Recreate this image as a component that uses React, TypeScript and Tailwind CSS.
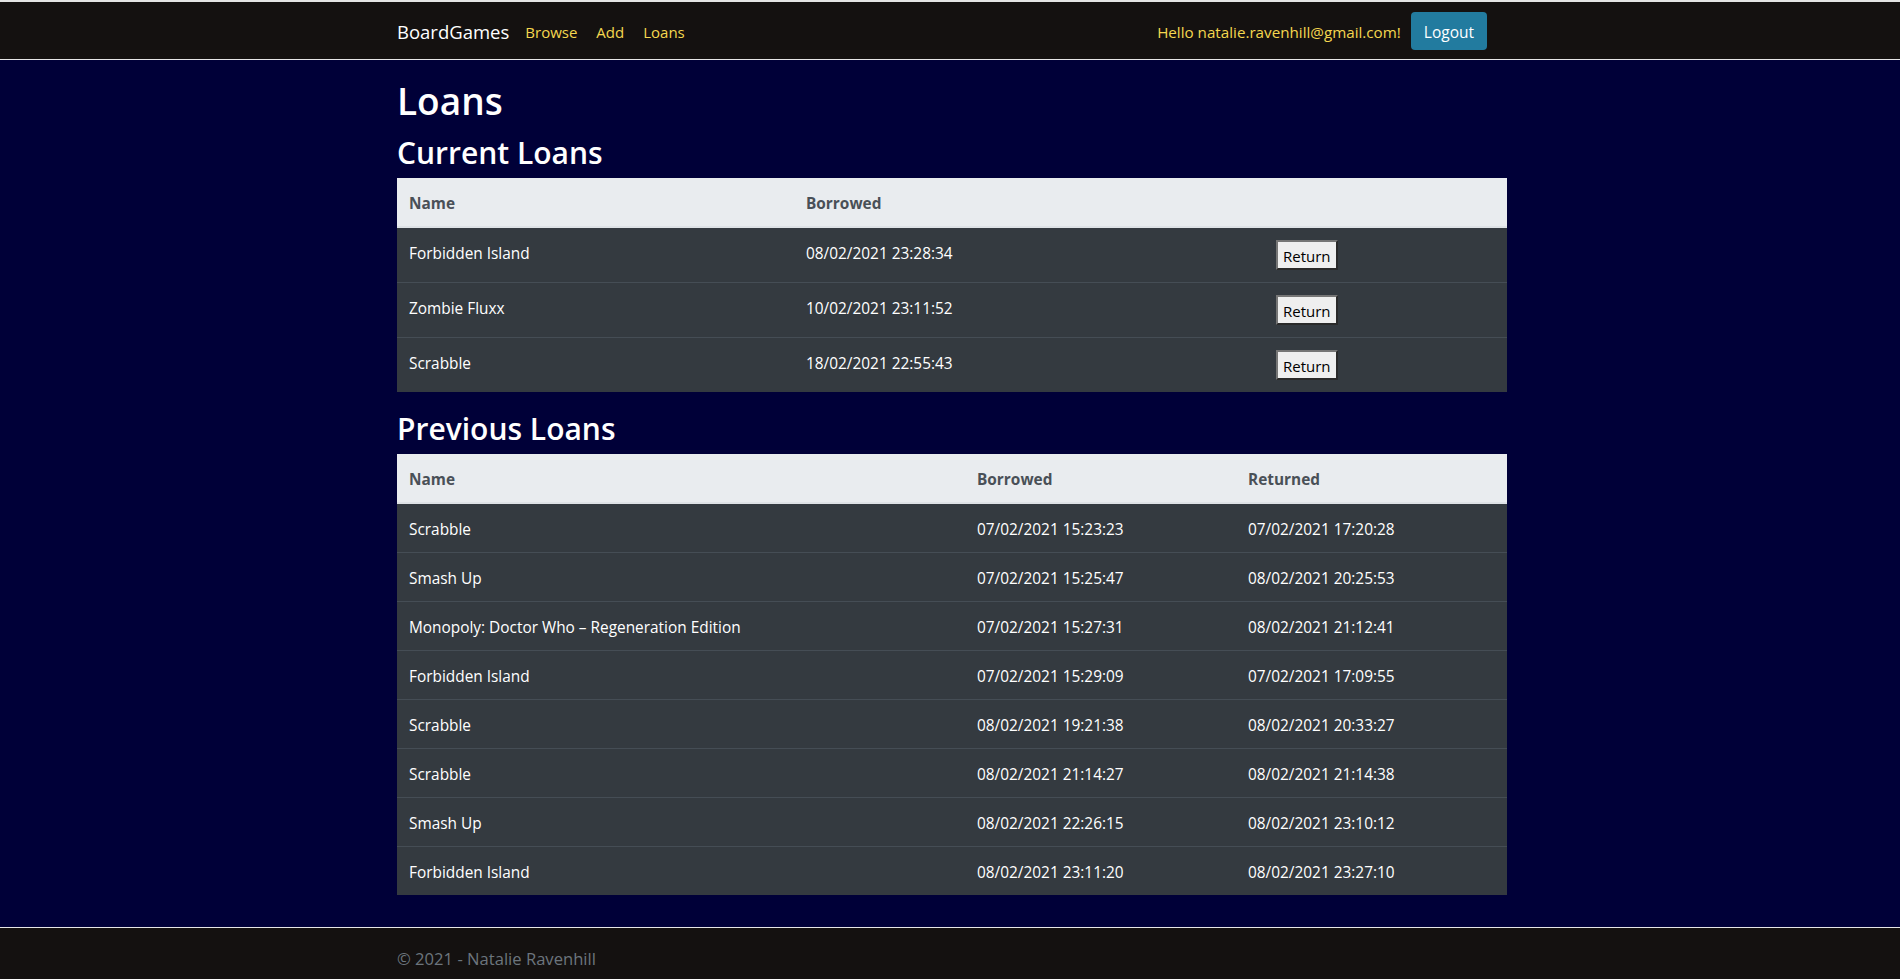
import React from "react";

interface CurrentLoan {
  name: string;
  borrowed: string;
}

interface PreviousLoan {
  name: string;
  borrowed: string;
  returned: string;
}

const currentLoans: CurrentLoan[] = [
  { name: "Forbidden Island", borrowed: "08/02/2021 23:28:34" },
  { name: "Zombie Fluxx", borrowed: "10/02/2021 23:11:52" },
  { name: "Scrabble", borrowed: "18/02/2021 22:55:43" },
];

const previousLoans: PreviousLoan[] = [
  { name: "Scrabble", borrowed: "07/02/2021 15:23:23", returned: "07/02/2021 17:20:28" },
  { name: "Smash Up", borrowed: "07/02/2021 15:25:47", returned: "08/02/2021 20:25:53" },
  { name: "Monopoly: Doctor Who – Regeneration Edition", borrowed: "07/02/2021 15:27:31", returned: "08/02/2021 21:12:41" },
  { name: "Forbidden Island", borrowed: "07/02/2021 15:29:09", returned: "07/02/2021 17:09:55" },
  { name: "Scrabble", borrowed: "08/02/2021 19:21:38", returned: "08/02/2021 20:33:27" },
  { name: "Scrabble", borrowed: "08/02/2021 21:14:27", returned: "08/02/2021 21:14:38" },
  { name: "Smash Up", borrowed: "08/02/2021 22:26:15", returned: "08/02/2021 23:10:12" },
  { name: "Forbidden Island", borrowed: "08/02/2021 23:11:20", returned: "08/02/2021 23:27:10" },
];

function Navbar() {
  return (
    <nav className="border-t-2 border-b border-t-[#e4e4e4] border-b-[#e6e6e6] bg-[#141110]">
      <div className="ml-[397px] flex h-[57px] w-[1110px] items-center justify-between">
        <div className="flex items-center pt-[2px]">
          <span className="text-[18.5px] text-white">BoardGames</span>
          <a className="ml-[16px] text-[15px] text-[#f5d74f]">Browse</a>
          <a className="ml-[19px] text-[15px] text-[#f5d74f]">Add</a>
          <a className="ml-[19px] text-[15px] text-[#f5d74f]">Loans</a>
        </div>
        <div className="mr-[20px] flex items-center">
          <span className="pt-[2px] text-[15.2px] text-[#f5d74f]">Hello natalie.ravenhill@gmail.com!</span>
          <button className="ml-[10px] h-[38px] rounded-[4px] bg-[#227b9f] px-[13px] pt-[2px] text-[15.5px] text-white">
            Logout
          </button>
        </div>
      </div>
    </nav>
  );
}

function Th({ children, className = "" }: { children?: React.ReactNode; className?: string }) {
  return (
    <th className={`border-b-2 border-[#dee2e6] px-[12px] pt-[14px] pb-[10px] text-left align-bottom font-bold text-[#495057] ${className}`}>
      {children}
    </th>
  );
}

function Td({ children, className = "" }: { children?: React.ReactNode; className?: string }) {
  return <td className={`px-[12px] pt-[14px] pb-[10px] align-top ${className}`}>{children}</td>;
}

export default function App() {
  return (
    <div
      className="flex min-h-screen flex-col bg-[#000038] text-[15.4px] leading-[24px] text-white"
      style={{ fontFamily: '"Open Sans", "Noto Sans", sans-serif' }}
    >
      <Navbar />

      <main className="ml-[397px] w-[1110px] flex-1 pt-[16px] pb-[16px]">
        <h1 className="mb-[8px] pt-[2px] text-[37px] font-semibold leading-[46px]">Loans</h1>

        <h2 className="mb-[8px] pt-[3px] text-[30px] font-semibold leading-[35px]">Current Loans</h2>
        <table className="mb-[16px] w-full border-collapse bg-[#343a40]">
          <thead className="bg-[#e9ecef]">
            <tr>
              <Th className="w-[397px]">Name</Th>
              <Th className="w-[470px]">Borrowed</Th>
              <Th />
            </tr>
          </thead>
          <tbody>
            {currentLoans.map((loan, i) => (
              <tr key={i} className="border-t border-[#454d55] first:border-t-0">
                <Td>{loan.name}</Td>
                <Td>{loan.borrowed}</Td>
                <td className="p-[12px] align-top">
                  <button className="h-[30px] border-2 border-t-[#767676] border-l-[#767676] border-r-[#2a2a2a] border-b-[#2a2a2a] bg-[#efefef] px-[5px] pt-[1px] text-[15px] leading-[22px] text-black">
                    Return
                  </button>
                </td>
              </tr>
            ))}
          </tbody>
        </table>

        <h2 className="mb-[8px] pt-[3px] text-[30px] font-semibold leading-[35px]">Previous Loans</h2>
        <table className="mb-[16px] w-full border-collapse bg-[#343a40]">
          <thead className="bg-[#e9ecef]">
            <tr>
              <Th className="w-[568px]">Name</Th>
              <Th className="w-[271px]">Borrowed</Th>
              <Th>Returned</Th>
            </tr>
          </thead>
          <tbody>
            {previousLoans.map((loan, i) => (
              <tr key={i} className="border-t border-[#454d55] first:border-t-0">
                <Td>{loan.name}</Td>
                <Td>{loan.borrowed}</Td>
                <Td>{loan.returned}</Td>
              </tr>
            ))}
          </tbody>
        </table>
      </main>

      <footer className="h-[60px] border-t border-[#e6e6e6] bg-[#141110] pt-[2px] leading-[58px] text-[#6c757d]">
        <div className="ml-[397px] w-[1110px] text-[16.6px]">© 2021 - Natalie Ravenhill</div>
      </footer>
    </div>
  );
}
